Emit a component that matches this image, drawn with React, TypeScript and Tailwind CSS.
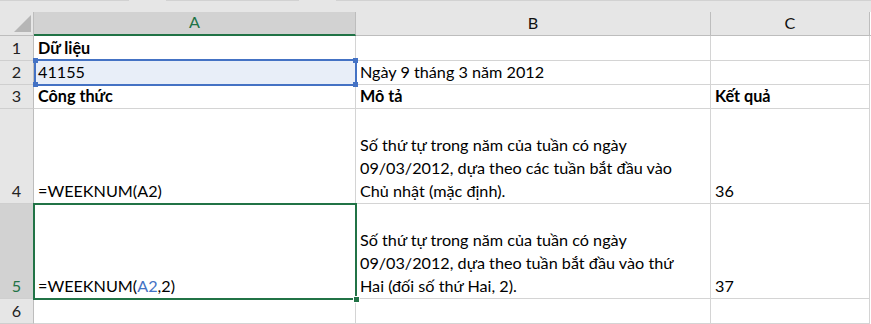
import type { ReactNode } from "react";

type Row = {
  n: number;
  h: string;
  active?: boolean;
  cells: [ReactNode, ReactNode, ReactNode];
};

const COLS = [
  { key: "A", w: "w-[322px]", selected: true },
  { key: "B", w: "w-[355px]", selected: false },
  { key: "C", w: "w-[159px]", selected: false },
];

// ribbon edges peeking in at the very top of the crop
const TOP_SEGMENTS = ["w-[133px]", "w-[137px]", "w-[550px]"];

const lines = (...ls: string[]) =>
  ls.map((l) => (
    <span key={l} className="block">
      {l}
    </span>
  ));

const ROWS: Row[] = [
  {
    n: 1,
    h: "h-[25px]",
    cells: [<span className="font-bold">Dữ liệu</span>, null, null],
  },
  {
    n: 2,
    h: "h-[24px]",
    cells: ["41155", "Ngày 9 tháng 3 năm 2012", null],
  },
  {
    n: 3,
    h: "h-[24px]",
    cells: [
      <span className="font-bold">Công thức</span>,
      <span className="font-bold">Mô tả</span>,
      <span className="font-bold">Kết quả</span>,
    ],
  },
  {
    n: 4,
    h: "h-[95px]",
    cells: [
      "=WEEKNUM(A2)",
      lines(
        "Số thứ tự trong năm của tuần có ngày",
        "09/03/2012, dựa theo các tuần bắt đầu vào",
        "Chủ nhật (mặc định)."
      ),
      "36",
    ],
  },
  {
    n: 5,
    h: "h-[95px]",
    active: true,
    cells: [
      <>
        =WEEKNUM(<span className="text-[#4472c4]">A2</span>,2)
      </>,
      lines(
        "Số thứ tự trong năm của tuần có ngày",
        "09/03/2012, dựa theo tuần bắt đầu vào thứ",
        "Hai (đối số thứ Hai, 2)."
      ),
      "37",
    ],
  },
  { n: 6, h: "h-[25px]", cells: [null, null, null] },
];

export default function App() {
  return (
    <div className="relative w-[871px] h-[324px] overflow-hidden bg-[#e6e6e6] font-['Lato',sans-serif] text-[16.2px] text-black">
      {/* top strip */}
      <div className="flex h-[12px] gap-[37px]">
        {TOP_SEGMENTS.map((w, i) => (
          <div key={i} className={`${w} h-px bg-[#d2d2d2]`} />
        ))}
      </div>

      {/* column headers */}
      <div className="flex h-[24px]">
        <div className="relative w-[34px] border-r border-b border-[#bdbdbd]">
          <svg
            className="absolute right-[2px] bottom-[3px]"
            width="17"
            height="17"
            viewBox="0 0 17 17"
          >
            <polygon points="17,0 17,17 0,17" fill="#b6b6b6" />
          </svg>
        </div>
        {COLS.map((c) => (
          <div
            key={c.key}
            className={`${c.w} flex items-end justify-center leading-[23px] border-r border-[#bdbdbd] ${
              c.selected
                ? "bg-[#d2d2d2] text-[#217346] border-b-2 border-b-[#217346]"
                : "text-[#111] border-b border-b-[#bdbdbd]"
            }`}
          >
            <span className="pb-[1px]">{c.key}</span>
          </div>
        ))}
        <div className="w-px bg-white border-b border-[#bdbdbd]" />
      </div>

      {/* rows */}
      {ROWS.map((r) => (
        <div key={r.n} className={`flex ${r.h}`}>
          <div
            className={`w-[34px] flex items-end justify-center leading-[23px] pb-[1px] border-r border-r-[#bdbdbd] border-b border-b-[#cfcfcf] ${
              r.active ? "bg-[#d2d2d2] text-[#217346]" : "text-[#222]"
            }`}
          >
            {r.n}
          </div>
          {COLS.map((c, i) => (
            <div
              key={c.key}
              className={`${c.w} flex items-end px-[4px] pb-[1px] leading-[23px] whitespace-nowrap border-r border-b border-[#d4d4d4] ${
                r.n === 2 && i === 0 ? "bg-[#e8eef8]" : "bg-white"
              }`}
            >
              <div>{r.cells[i]}</div>
            </div>
          ))}
          <div className="w-px bg-white" />
        </div>
      ))}

      {/* A2 reference highlight */}
      <div className="absolute left-[34px] top-[59px] w-[323px] h-[27px] border-2 border-[#4472c4]">
        <span className="absolute -left-[3px] -top-[3px] w-[5px] h-[5px] bg-[#4472c4]" />
        <span className="absolute -right-[3px] -top-[3px] w-[5px] h-[5px] bg-[#4472c4]" />
        <span className="absolute -left-[3px] -bottom-[3px] w-[5px] h-[5px] bg-[#4472c4]" />
        <span className="absolute -right-[3px] -bottom-[3px] w-[5px] h-[5px] bg-[#4472c4]" />
      </div>

      {/* active cell A5 */}
      <div className="absolute left-[33px] top-[203px] w-[324px] h-[97px] border-2 border-[#217346]">
        <span className="absolute -right-[5px] -bottom-[5px] w-[7px] h-[7px] bg-[#217346] border border-white" />
      </div>
    </div>
  );
}
